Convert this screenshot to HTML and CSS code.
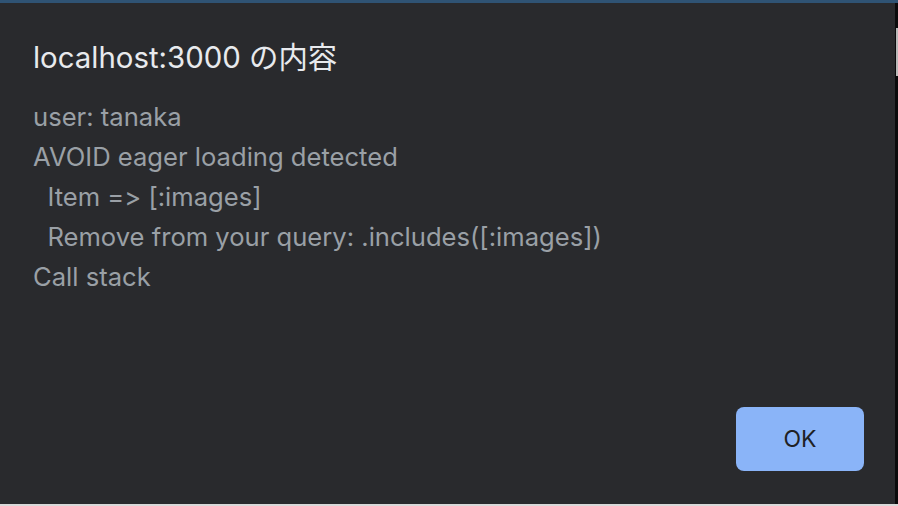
FILE: index.html
```html
<!DOCTYPE html>
<html lang="ja">
<head>
<meta charset="utf-8">
<title>localhost:3000 の内容</title>
<link rel="stylesheet" href="styles.css">
</head>
<body>
<div class="topbar"></div>
<div class="stage">
  <div class="dialog">
    <h1 class="title">localhost:3000 の内容</h1>
    <div class="message">user: tanaka
AVOID eager loading detected
  Item =&gt; [:images]
  Remove from your query: .includes([:images])
Call stack</div>
    <div class="actions">
      <button class="ok">OK</button>
    </div>
  </div>
  <div class="edge"><div class="edge-thumb"></div></div>
</div>
<div class="bottomline"></div>
</body>
</html>
```

FILE: styles.css
```css
html, body {
  margin: 0;
  padding: 0;
  width: 898px;
  height: 506px;
  overflow: hidden;
  background: #292a2d;
  font-family: Inter, "Noto Sans CJK JP", sans-serif;
  font-variant-ligatures: none;
  font-feature-settings: "calt" 0, "liga" 0;
}
.topbar {
  height: 3px;
  background: #2f5374;
}
.stage {
  display: flex;
  height: 501px;
}
.dialog {
  width: 895px;
  height: 501px;
  box-sizing: border-box;
  padding: 35px 31px 33px 33px;
  background: #292a2d;
  display: flex;
  flex-direction: column;
  flex: none;
}
.edge {
  width: 3px;
  background: #0b0b0c;
}
.edge-thumb {
  margin-top: 25px;
  height: 48px;
  width: 2px;
  margin-left: 1px;
  background: #b9b9b9;
}
.bottomline {
  height: 2px;
  background: #d9d9d9;
}
.title {
  margin: 0;
  font-size: 29.4px;
  line-height: 40px;
  font-weight: 400;
  color: #e8eaed;
}
.message {
  margin-top: 19px;
  white-space: pre-wrap;
  font-size: 25.6px;
  line-height: 40px;
  color: #9aa0a6;
}
.actions {
  margin-top: auto;
  display: flex;
  justify-content: flex-end;
}
.ok {
  width: 128px;
  height: 64px;
  border: none;
  border-radius: 8px;
  background: #8ab4f8;
  color: #202124;
  font-family: Inter, sans-serif;
  font-size: 23px;
  padding: 0;
}
```
